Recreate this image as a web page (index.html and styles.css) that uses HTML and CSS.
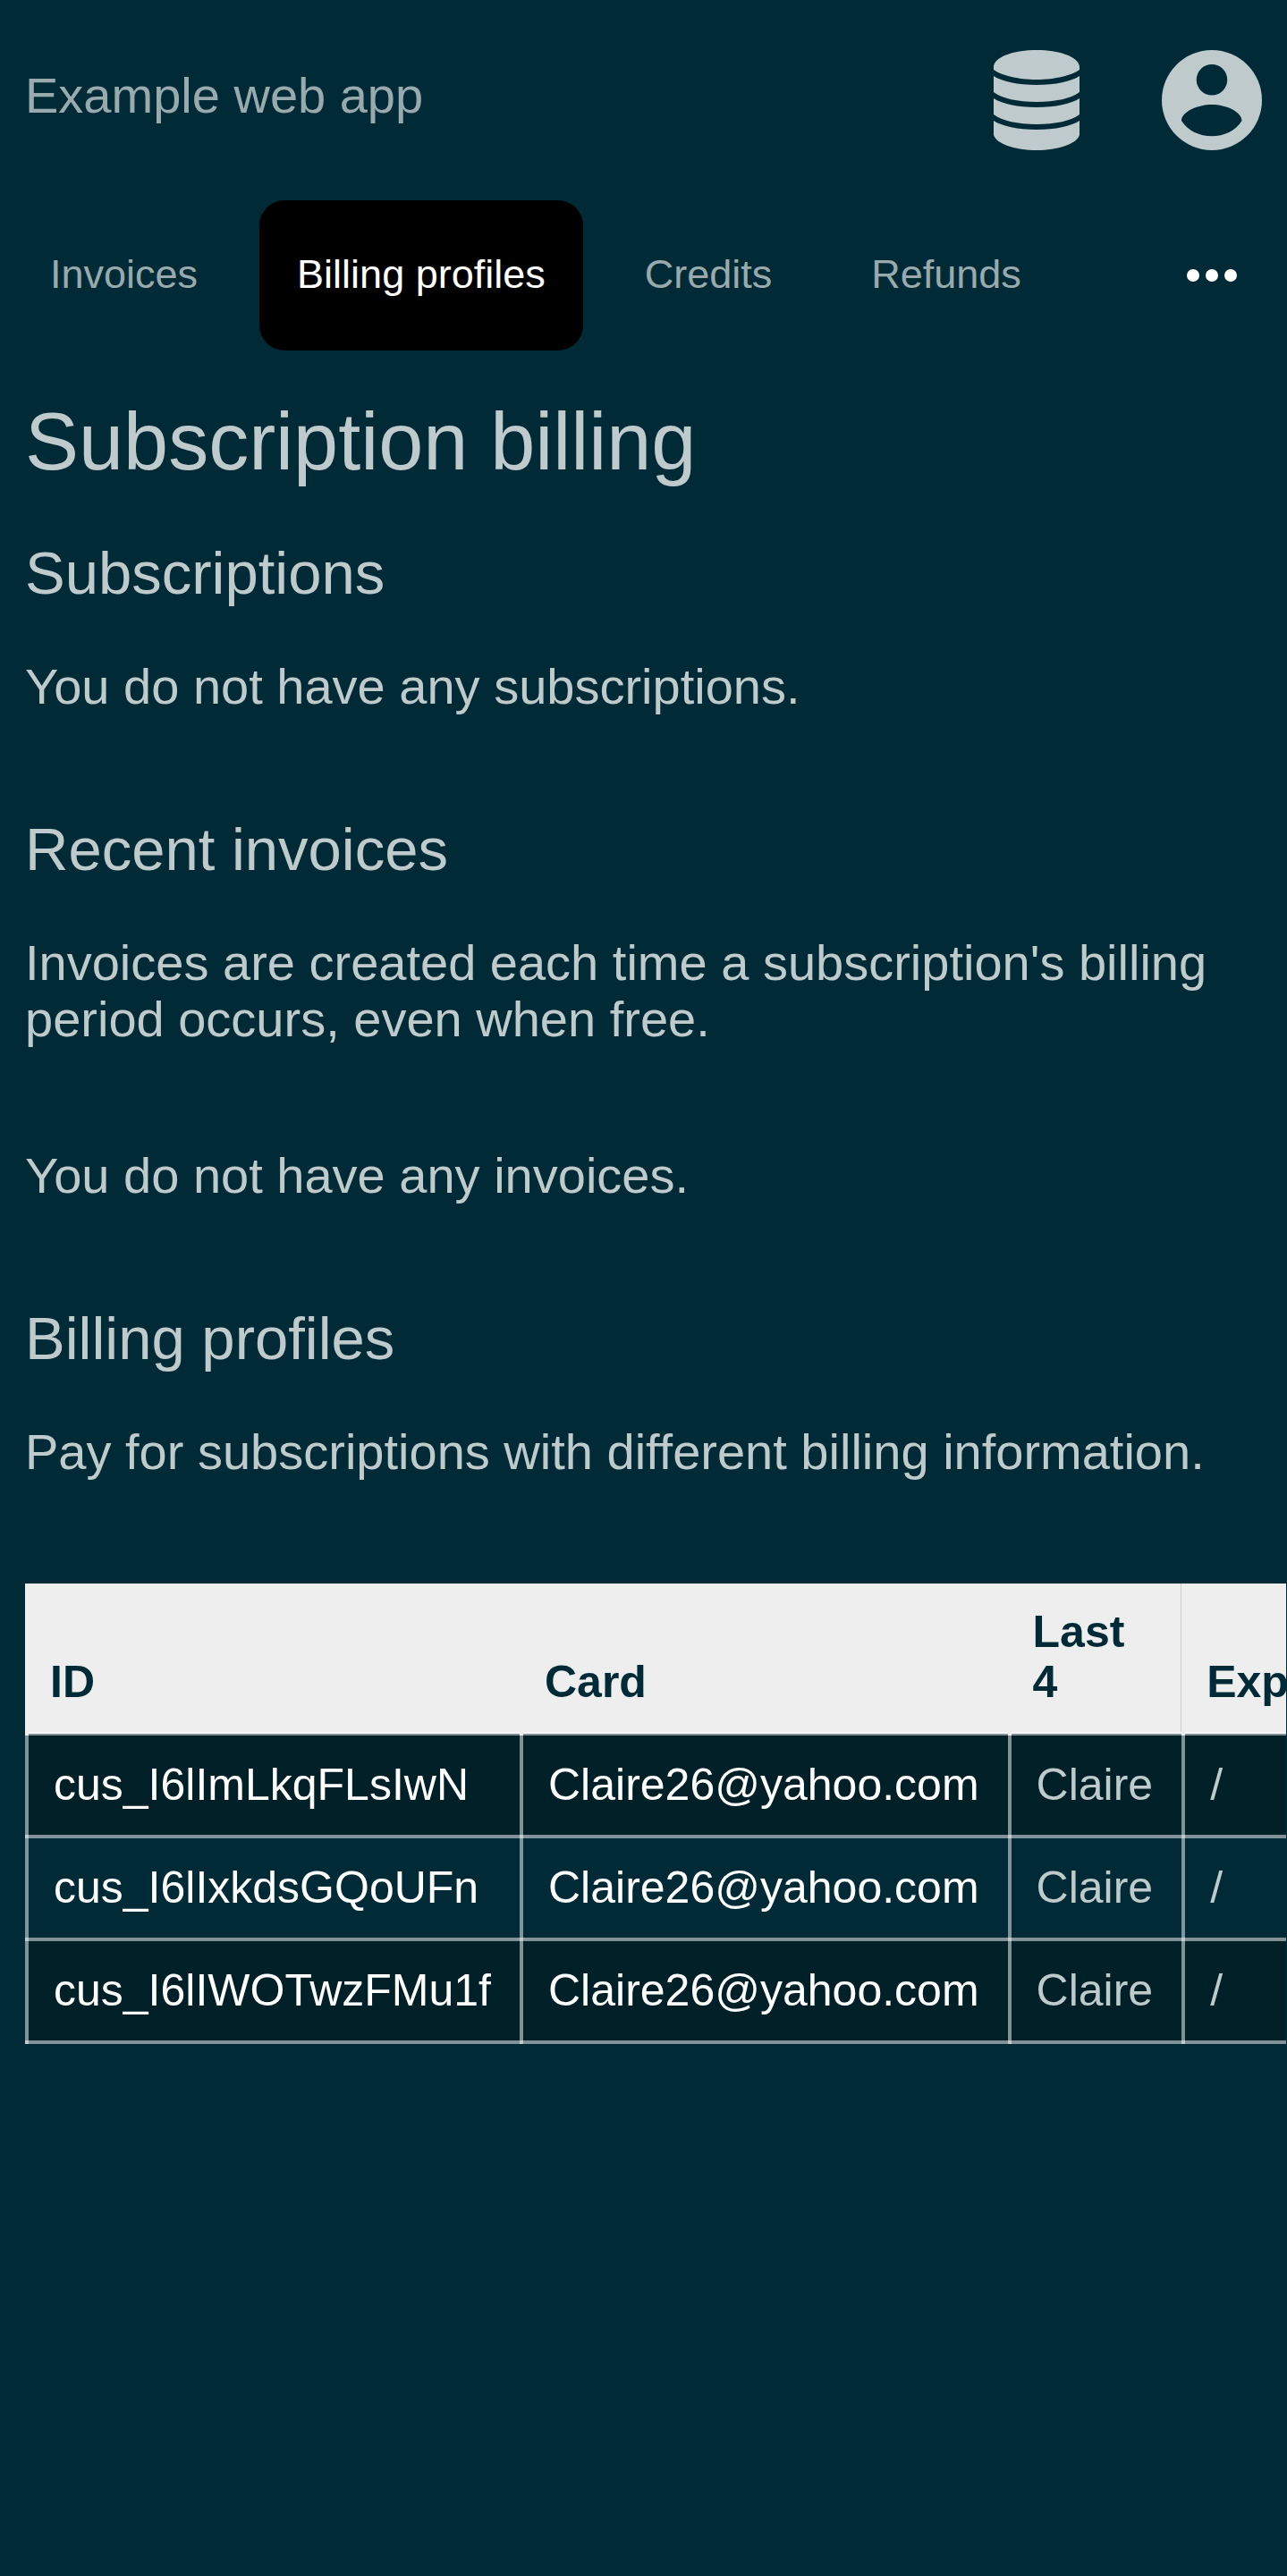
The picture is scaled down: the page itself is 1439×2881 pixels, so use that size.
FILE: index.html
```html
<!DOCTYPE html>
<html lang="en">
<head>
<meta charset="utf-8">
<meta name="viewport" content="width=device-width, initial-scale=1">
<title>Subscription billing</title>
<link rel="stylesheet" href="styles.css">
</head>
<body>
<header class="header">
  <a class="brand" href="#">Example web app</a>
  <div class="actions">
    <button class="icon-button" type="button" aria-label="Administration">
      <svg class="icon" viewBox="0 0 112 112" aria-hidden="true"><path d="M8 18C10 7 31 0 56 0s46 7 48 18v4C96 28 77 33 56 33S16 28 8 22zM8 29c9 6 27 10 48 10s39-4 48-10v18c-9 7-27 11-48 11S17 54 8 47zM8 54c9 6 27 10 48 10s39-4 48-10v18c-9 7-27 11-48 11S17 79 8 72zM8 79c9 6 27 10 48 10s39-4 48-10v16c-3 10-24 17-48 17S11 105 8 95z"/></svg>
    </button>
    <button class="icon-button" type="button" aria-label="Account">
      <svg class="icon" viewBox="0 0 112 112" aria-hidden="true"><path fill-rule="evenodd" d="M56 0a56 56 0 1 1 0 112a56 56 0 0 1 0-112zM56 16a17 17 0 1 0 0 34.500a17 17 0 0 0 0-34.500zM22 79C36 102 76 102 89.500 79C89.500 69 72 61 56 61S22 69 22 79z"/></svg>
    </button>
  </div>
</header>
<nav class="nav">
  <a class="tab" href="#">Invoices</a>
  <a class="tab tab-active" href="#" aria-current="page">Billing profiles</a>
  <a class="tab" href="#">Credits</a>
  <a class="tab" href="#">Refunds</a>
  <button class="more" type="button" aria-label="More">
    <svg class="dots" viewBox="0 0 56 14" aria-hidden="true"><circle cx="7" cy="7" r="7"/><circle cx="28" cy="7" r="7"/><circle cx="49" cy="7" r="7"/></svg>
  </button>
</nav>
<main class="main">
  <h1>Subscription billing</h1>
  <section>
    <h2>Subscriptions</h2>
    <p>You do not have any subscriptions.</p>
  </section>
  <section>
    <h2>Recent invoices</h2>
    <p>Invoices are created each time a subscription's billing period occurs, even when free.</p>
    <p>You do not have any invoices.</p>
  </section>
  <section>
    <h2>Billing profiles</h2>
    <p>Pay for subscriptions with different billing information.</p>
    <div class="table-wrap">
      <table>
        <thead>
          <tr><th>ID</th><th>Card</th><th class="divided">Last 4</th><th>Expires</th></tr>
        </thead>
        <tbody>
          <tr><td><a href="#">cus_I6lImLkqFLsIwN</a></td><td><a href="#">Claire26@yahoo.com</a></td><td>Claire</td><td>/</td></tr>
          <tr><td><a href="#">cus_I6lIxkdsGQoUFn</a></td><td><a href="#">Claire26@yahoo.com</a></td><td>Claire</td><td>/</td></tr>
          <tr><td><a href="#">cus_I6lIWOTwzFMu1f</a></td><td><a href="#">Claire26@yahoo.com</a></td><td>Claire</td><td>/</td></tr>
        </tbody>
      </table>
    </div>
  </section>
</main>
</body>
</html>
```
FILE: styles.css
```css
* { box-sizing: border-box; }

body {
  margin: 0;
  min-height: 100vh;
  background: #002b36;
  color: #bfcacd;
  font: 56px/63px "Liberation Sans", Arial, sans-serif;
}

a { color: inherit; text-decoration: none; }

button {
  padding: 0;
  border: 0;
  background: none;
  color: inherit;
  cursor: pointer;
}

svg { display: block; fill: currentColor; }

.header {
  display: flex;
  align-items: flex-start;
  justify-content: space-between;
  padding: 56px 28px;
}

.brand { color: #99aaaf; line-height: 102px; }
.actions { display: flex; gap: 84px; }
.icon { width: 112px; height: 112px; }

.nav {
  display: flex;
  gap: 27px;
  padding: 0 14px;
  color: #99aaaf;
  font-size: 45px;
  line-height: 62px;
}

.tab { padding: 52px 42px 54px; border-radius: 28px; }
.tab-active { background: #000; color: #fff; }
.more { margin-left: auto; padding: 0 42px; color: #fff; }
.dots { width: 56px; height: 14px; }

.main { padding: 50px 0 56px 28px; }

h1, h2, p { margin: 0; font-weight: 400; }
h1 { font-size: 90px; line-height: 104px; }
h2 { margin: 56px 0 57px; font-size: 67px; line-height: 77px; }
p { margin: 0 28px 112px 0; }

.table-wrap { margin: 116px 1px 0 0; overflow: hidden; }

table { border-collapse: collapse; font-size: 50px; line-height: 55px; }
th {
  padding: 26px 32px 28px 24px;
  border-left: 4px solid #eee;
  background: #eee;
  color: #002b36;
  line-height: 56px;
  text-align: left;
  vertical-align: bottom;
}
.divided { box-shadow: inset -1px 0 #ccc; }
td { padding: 28px 32px 28px 28px; border: 4px solid rgba(255, 255, 255, 0.5); }
td a { color: #fff; }
tbody tr:nth-child(odd) { background: rgba(0, 0, 0, 0.25); }
```
